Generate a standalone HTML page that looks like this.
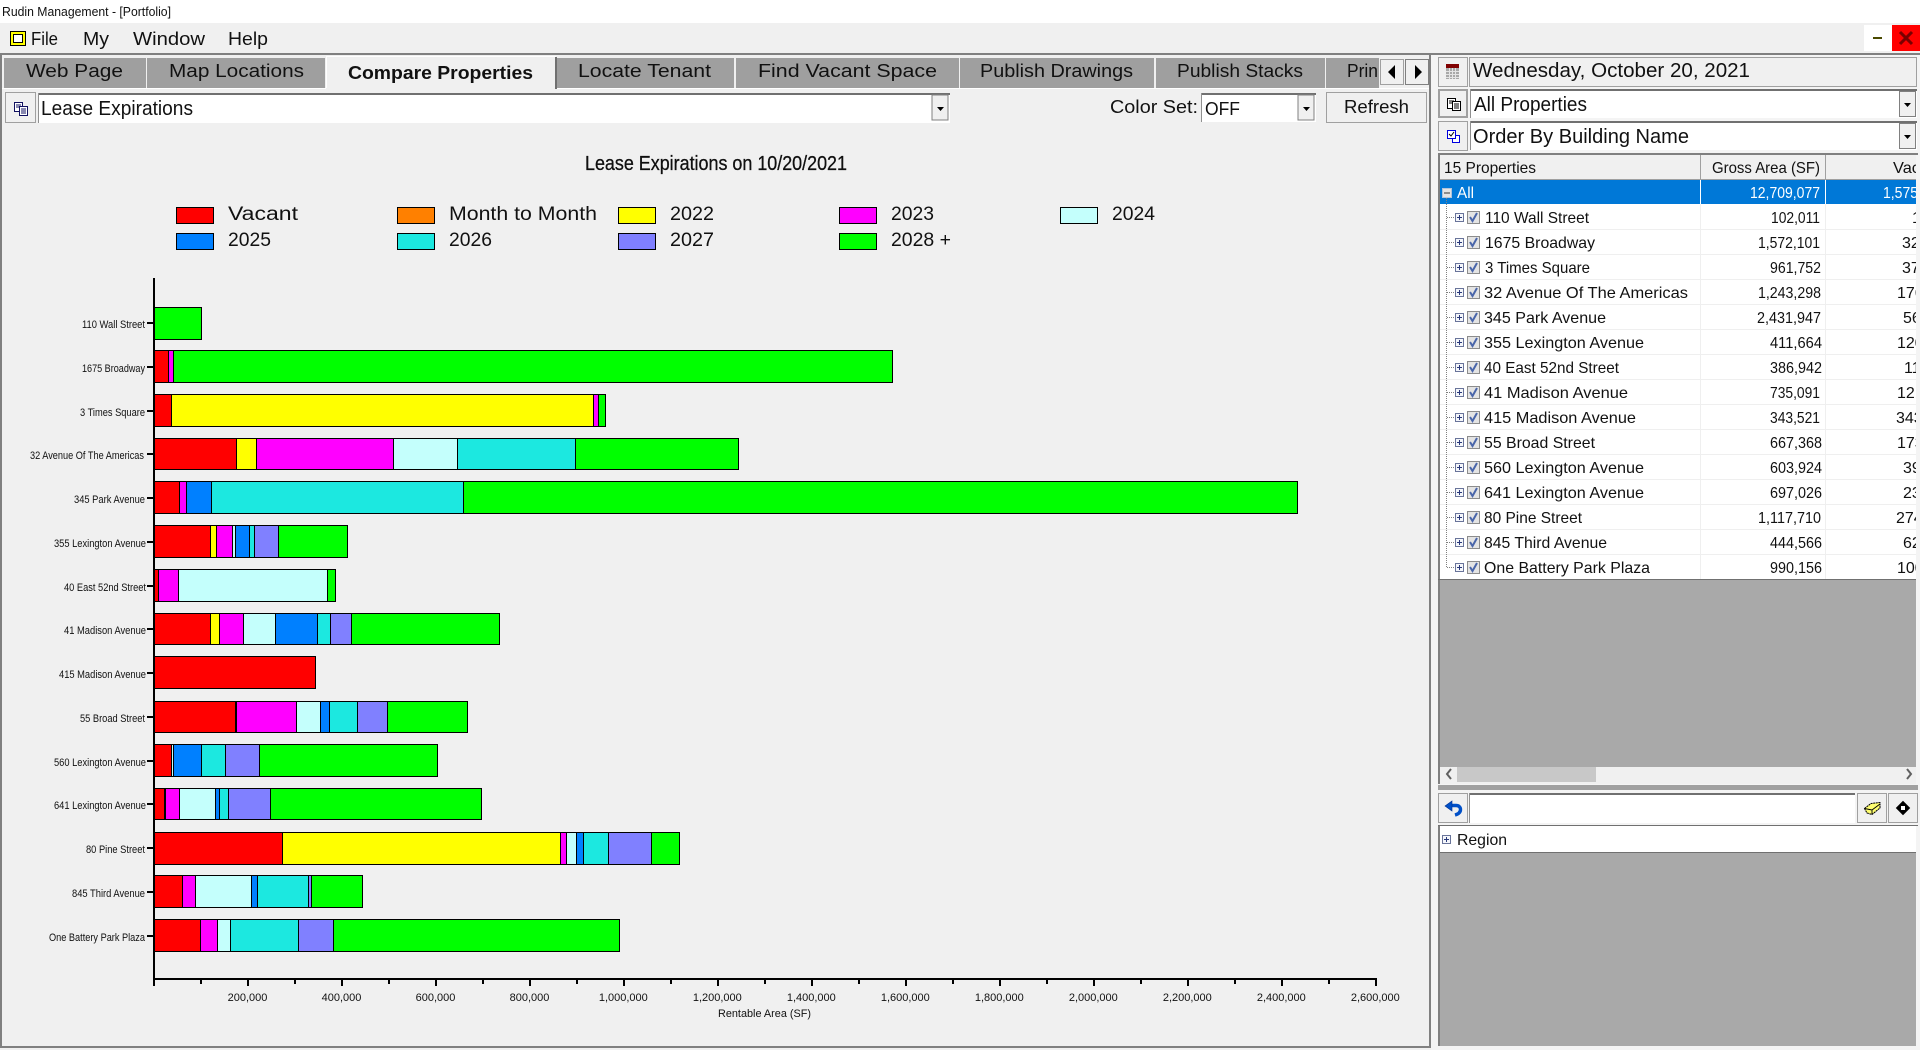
<!DOCTYPE html>
<html lang="en">
<head>
<meta charset="utf-8">
<title>Rudin Management - [Portfolio]</title>
<style>
html,body{margin:0;padding:0;width:1920px;height:1050px;overflow:hidden;background:#f0f0f0}
svg{display:block;font-family:"Liberation Sans",sans-serif}
text{fill:#111}
.t18{font-size:18px}.t19{font-size:19px}.t20{font-size:20px}.t16{font-size:16px}.t11{font-size:11px}.w{fill:#fff}
.bars rect{stroke:#000;stroke-width:1.4;shape-rendering:crispEdges}
.r{fill:#f00}.y{fill:#ff0}.m{fill:#f0f}.p{fill:#c4fffc}.b{fill:#0080ff}.c{fill:#1ce8e0}.l{fill:#8080ff}.g{fill:#0f0}.o{fill:#ff8000}
.crisp rect,.crisp path{shape-rendering:crispEdges}
</style>
</head>
<body>
<svg xmlns="http://www.w3.org/2000/svg" width="1920" height="1050" viewBox="0 0 1920 1050">
<defs>
<clipPath id="c3"><rect x="1826" y="155" width="90" height="425"/></clipPath>
<g id="rc">
<path d="M1447 13.5h8" stroke="#808080" stroke-dasharray="1 1"/>
<rect x="1455.5" y="9.5" width="8" height="8" fill="#f4f6fa" stroke="#69749a"/>
<path d="M1457 13.5h5M1459.5 11v5" stroke="#28387a"/>
<rect x="1467.5" y="7.5" width="12" height="12" fill="#e4e4e4" stroke="#8c8c8c"/>
<path d="M1470 13l2.5 4 4.5-8" fill="none" stroke="#4a66aa" stroke-width="2"/>
</g>
<path id="dd" d="M0 0h7l-3.5 4z" fill="#000"/>
</defs>

<!-- title bar -->
<rect x="0" y="0" width="1920" height="23" fill="#fff"/>
<text x="2" y="16" font-size="13" textLength="169" lengthAdjust="spacingAndGlyphs">Rudin Management - [Portfolio]</text>

<!-- menu bar -->
<g class="crisp">
<rect x="10" y="31" width="16" height="15" fill="#000"/>
<rect x="11" y="32" width="14" height="13" fill="#ff0"/>
<rect x="13" y="34" width="10" height="9" fill="#000"/>
<rect x="14" y="35" width="8" height="7" fill="#fff"/>
</g>
<text class="t18" x="31" y="45" textLength="27" lengthAdjust="spacingAndGlyphs">File</text>
<text class="t18" x="83" y="45" textLength="26" lengthAdjust="spacingAndGlyphs">My</text>
<text class="t18" x="133" y="45" textLength="72" lengthAdjust="spacingAndGlyphs">Window</text>
<text class="t18" x="228" y="45" textLength="40" lengthAdjust="spacingAndGlyphs">Help</text>
<rect x="1864" y="25" width="28" height="26" fill="#fff"/>
<rect x="1892" y="25" width="28" height="26" fill="#f00"/>
<rect x="1873" y="37" width="9" height="2" fill="#4a4a00"/>
<path d="M1900 32l12 12M1912 32l-12 12" stroke="#7a0000" stroke-width="3" fill="none"/>

<!-- main frame -->
<rect x="0" y="53" width="1920" height="2" fill="#808080"/>
<rect x="0" y="53" width="2" height="995" fill="#808080"/>
<rect x="1429" y="53" width="2" height="995" fill="#808080"/>
<rect x="0" y="1046" width="1431" height="2" fill="#808080"/>
<rect x="2" y="88" width="1427" height="1" fill="#fff"/>
<rect x="1431" y="55" width="489" height="995" fill="#f4f4f4"/>

<!-- tabs -->
<g class="crisp" fill="#9f9f9f">
<rect x="4" y="58" width="142" height="30"/>
<rect x="147" y="58" width="178" height="30"/>
<rect x="557" y="58" width="177" height="30"/>
<rect x="736" y="58" width="223" height="30"/>
<rect x="960" y="58" width="194" height="30"/>
<rect x="1156" y="58" width="169" height="30"/>
<rect x="1326" y="58" width="53" height="30"/>
</g>
<rect x="326" y="56" width="230" height="33" fill="#f0f0f0"/>
<rect x="326" y="56" width="230" height="1" fill="#fff"/>
<rect x="326" y="56" width="1" height="32" fill="#fff"/>
<rect x="555" y="57" width="2" height="32" fill="#707070"/>
<text class="t18" x="26" y="77" textLength="97" lengthAdjust="spacingAndGlyphs">Web Page</text>
<text class="t18" x="169" y="77" textLength="135" lengthAdjust="spacingAndGlyphs">Map Locations</text>
<text class="t18" x="348" y="79" font-weight="bold" textLength="185" lengthAdjust="spacingAndGlyphs">Compare Properties</text>
<text class="t18" x="578" y="77" textLength="133" lengthAdjust="spacingAndGlyphs">Locate Tenant</text>
<text class="t18" x="758" y="77" textLength="179" lengthAdjust="spacingAndGlyphs">Find Vacant Space</text>
<text class="t18" x="980" y="77" textLength="153" lengthAdjust="spacingAndGlyphs">Publish Drawings</text>
<text class="t18" x="1177" y="77" textLength="126" lengthAdjust="spacingAndGlyphs">Publish Stacks</text>
<text class="t18" x="1347" y="77" textLength="31" lengthAdjust="spacingAndGlyphs">Prin</text>
<g class="crisp">
<rect x="1380.5" y="59.5" width="23" height="25" fill="#f0f0f0" stroke="#a0a0a0"/>
<rect x="1405.5" y="59.5" width="23" height="25" fill="#f0f0f0" stroke="#808080"/>
</g>
<path d="M1395 65v14l-7-7zM1415 65v14l7-7z" fill="#000"/>

<!-- report selector row -->
<rect x="5.5" y="92.5" width="30" height="30" fill="#f0f0f0" stroke="#a0a0a0"/>
<g fill="#fff" stroke="#101060">
<rect x="14.5" y="102.5" width="8" height="9"/>
<rect x="19.5" y="106.5" width="8" height="9"/>
</g>
<path d="M16 105h5M16 107h3M21 109h5M21 111h5M21 113h5" stroke="#101060"/>
<rect x="38" y="93" width="912" height="30" fill="#fff"/>
<rect x="38" y="93" width="912" height="2" fill="#707070"/>
<rect x="38" y="93" width="1" height="30" fill="#909090"/>
<rect x="932" y="95" width="16" height="25" fill="#f0f0f0" stroke="#808080"/>
<use href="#dd" x="937" y="107"/>
<text class="t20" x="41" y="115" textLength="152" lengthAdjust="spacingAndGlyphs">Lease Expirations</text>
<text class="t18" x="1110" y="113" textLength="88" lengthAdjust="spacingAndGlyphs">Color Set:</text>
<rect x="1201" y="93" width="115" height="29" fill="#fff"/>
<rect x="1201" y="93" width="115" height="2" fill="#707070"/>
<rect x="1201" y="93" width="1" height="29" fill="#909090"/>
<rect x="1298" y="95" width="16" height="25" fill="#f0f0f0" stroke="#808080"/>
<use href="#dd" x="1303" y="107"/>
<text class="t18" x="1205" y="115" textLength="35" lengthAdjust="spacingAndGlyphs">OFF</text>
<rect x="1326.5" y="92.5" width="100" height="30" fill="#f0f0f0" stroke="#a0a0a0"/>
<text class="t18" x="1344" y="113" textLength="65" lengthAdjust="spacingAndGlyphs">Refresh</text>

<!-- chart title -->
<text class="t20" x="585" y="170" stroke="#000" stroke-width=".25" textLength="262" lengthAdjust="spacingAndGlyphs">Lease Expirations on 10/20/2021</text>

<!-- legend -->
<g class="crisp" stroke="#000">
<rect class="r" x="176.5" y="207.5" width="37" height="16"/>
<rect class="o" x="397.5" y="207.5" width="37" height="16"/>
<rect class="y" x="618.5" y="207.5" width="37" height="16"/>
<rect class="m" x="839.5" y="207.5" width="37" height="16"/>
<rect class="p" x="1060.5" y="207.5" width="37" height="16"/>
<rect class="b" x="176.5" y="233.5" width="37" height="16"/>
<rect class="c" x="397.5" y="233.5" width="37" height="16"/>
<rect class="l" x="618.5" y="233.5" width="37" height="16"/>
<rect class="g" x="839.5" y="233.5" width="37" height="16"/>
</g>
<text class="t19" x="228" y="220" textLength="70" lengthAdjust="spacingAndGlyphs">Vacant</text>
<text class="t19" x="449" y="220" textLength="148" lengthAdjust="spacingAndGlyphs">Month to Month</text>
<text class="t19" x="670" y="220" textLength="44" lengthAdjust="spacingAndGlyphs">2022</text>
<text class="t19" x="891" y="220" textLength="43" lengthAdjust="spacingAndGlyphs">2023</text>
<text class="t19" x="1112" y="220" textLength="43" lengthAdjust="spacingAndGlyphs">2024</text>
<text class="t19" x="228" y="246" textLength="43" lengthAdjust="spacingAndGlyphs">2025</text>
<text class="t19" x="449" y="246" textLength="43" lengthAdjust="spacingAndGlyphs">2026</text>
<text class="t19" x="670" y="246" textLength="44" lengthAdjust="spacingAndGlyphs">2027</text>
<text class="t19" x="891" y="246" textLength="60" lengthAdjust="spacingAndGlyphs">2028 +</text>

<!-- axes -->
<g class="crisp" fill="#000">
<rect x="153" y="278" width="2" height="702"/>
<rect x="153" y="978" width="1224" height="2"/>
<path d="M147 322h6v2h-6zM147 366h6v2h-6zM147 410h6v2h-6zM147 453h6v2h-6zM147 497h6v2h-6zM147 541h6v2h-6zM147 585h6v2h-6zM147 628h6v2h-6zM147 672h6v2h-6zM147 716h6v2h-6zM147 760h6v2h-6zM147 803h6v2h-6zM147 847h6v2h-6zM147 891h6v2h-6zM147 935h6v2h-6z"/>
<path d="M153 980h2v6h-2zM247 980h2v6h-2zM341 980h2v6h-2zM435 980h2v6h-2zM529 980h2v6h-2zM623 980h2v6h-2zM717 980h2v6h-2zM811 980h2v6h-2zM905 980h2v6h-2zM999 980h2v6h-2zM1093 980h2v6h-2zM1187 980h2v6h-2zM1281 980h2v6h-2zM1375 980h2v6h-2z"/>
<path d="M200 980h2v4h-2zM294 980h2v4h-2zM388 980h2v4h-2zM482 980h2v4h-2zM576 980h2v4h-2zM670 980h2v4h-2zM764 980h2v4h-2zM858 980h2v4h-2zM952 980h2v4h-2zM1046 980h2v4h-2zM1140 980h2v4h-2zM1234 980h2v4h-2zM1328 980h2v4h-2z"/>
</g>

<!-- y labels -->
<g class="t11">
<text x="82" y="328" textLength="63" lengthAdjust="spacingAndGlyphs">110 Wall Street</text>
<text x="82" y="372" textLength="63" lengthAdjust="spacingAndGlyphs">1675 Broadway</text>
<text x="80" y="416" textLength="65" lengthAdjust="spacingAndGlyphs">3 Times Square</text>
<text x="30" y="459" textLength="114" lengthAdjust="spacingAndGlyphs">32 Avenue Of The Americas</text>
<text x="74" y="503" textLength="71" lengthAdjust="spacingAndGlyphs">345 Park Avenue</text>
<text x="54" y="547" textLength="92" lengthAdjust="spacingAndGlyphs">355 Lexington Avenue</text>
<text x="64" y="591" textLength="82" lengthAdjust="spacingAndGlyphs">40 East 52nd Street</text>
<text x="64" y="634" textLength="82" lengthAdjust="spacingAndGlyphs">41 Madison Avenue</text>
<text x="59" y="678" textLength="87" lengthAdjust="spacingAndGlyphs">415 Madison Avenue</text>
<text x="80" y="722" textLength="65" lengthAdjust="spacingAndGlyphs">55 Broad Street</text>
<text x="54" y="766" textLength="92" lengthAdjust="spacingAndGlyphs">560 Lexington Avenue</text>
<text x="54" y="809" textLength="92" lengthAdjust="spacingAndGlyphs">641 Lexington Avenue</text>
<text x="86" y="853" textLength="59" lengthAdjust="spacingAndGlyphs">80 Pine Street</text>
<text x="72" y="897" textLength="73" lengthAdjust="spacingAndGlyphs">845 Third Avenue</text>
<text x="49" y="941" textLength="96" lengthAdjust="spacingAndGlyphs">One Battery Park Plaza</text>
</g>

<!-- x labels -->
<g class="t11" text-anchor="middle">
<text x="247.5" y="1001">200,000</text>
<text x="341.500" y="1001">400,000</text>
<text x="435.5" y="1001">600,000</text>
<text x="529.5" y="1001">800,000</text>
<text x="623.3" y="1001">1,000,000</text>
<text x="717.3" y="1001">1,200,000</text>
<text x="811.3" y="1001">1,400,000</text>
<text x="905.3" y="1001">1,600,000</text>
<text x="999.3" y="1001">1,800,000</text>
<text x="1093.3" y="1001">2,000,000</text>
<text x="1187.3" y="1001">2,200,000</text>
<text x="1281.3" y="1001">2,400,000</text>
<text x="1375.3" y="1001">2,600,000</text>
</g>
<text class="t11" x="718" y="1017" textLength="93" lengthAdjust="spacingAndGlyphs">Rentable Area (SF)</text>

<!-- bars -->
<g class="bars">
<g transform="translate(0,307.5)"><rect class="g" x="154.5" y="0" width="47" height="32"/></g>
<g transform="translate(0,350.5)"><rect class="r" x="154.5" y="0" width="14" height="32"/><rect class="m" x="168.5" y="0" width="5" height="32"/><rect class="g" x="173.5" y="0" width="719" height="32"/></g>
<g transform="translate(0,394.5)"><rect class="r" x="154.5" y="0" width="17" height="32"/><rect class="y" x="171.5" y="0" width="422" height="32"/><rect class="m" x="593.5" y="0" width="5" height="32"/><rect class="g" x="598.5" y="0" width="7" height="32"/></g>
<g transform="translate(0,438.5)"><rect class="r" x="154.5" y="0" width="82" height="31"/><rect class="y" x="236.5" y="0" width="20" height="31"/><rect class="m" x="256.5" y="0" width="137" height="31"/><rect class="p" x="393.5" y="0" width="64" height="31"/><rect class="c" x="457.5" y="0" width="118" height="31"/><rect class="g" x="575.5" y="0" width="163" height="31"/></g>
<g transform="translate(0,481.5)"><rect class="r" x="154.5" y="0" width="25" height="32"/><rect class="m" x="179.5" y="0" width="7" height="32"/><rect class="b" x="186.5" y="0" width="25" height="32"/><rect class="c" x="211.5" y="0" width="252" height="32"/><rect class="g" x="463.5" y="0" width="834" height="32"/></g>
<g transform="translate(0,525.5)"><rect class="r" x="154.5" y="0" width="56" height="32"/><rect class="y" x="210.5" y="0" width="6" height="32"/><rect class="m" x="216.5" y="0" width="16" height="32"/><rect class="p" x="232.5" y="0" width="3" height="32"/><rect class="b" x="235.5" y="0" width="14" height="32"/><rect class="c" x="249.5" y="0" width="5" height="32"/><rect class="l" x="254.5" y="0" width="24" height="32"/><rect class="g" x="278.5" y="0" width="69" height="32"/></g>
<g transform="translate(0,569.5)"><rect class="r" x="154.5" y="0" width="4" height="32"/><rect class="m" x="158.5" y="0" width="20" height="32"/><rect class="p" x="178.5" y="0" width="149" height="32"/><rect class="g" x="327.5" y="0" width="8" height="32"/></g>
<g transform="translate(0,613.5)"><rect class="r" x="154.5" y="0" width="56" height="31"/><rect class="y" x="210.5" y="0" width="9" height="31"/><rect class="m" x="219.5" y="0" width="24" height="31"/><rect class="p" x="243.5" y="0" width="32" height="31"/><rect class="b" x="275.5" y="0" width="42" height="31"/><rect class="c" x="317.5" y="0" width="13" height="31"/><rect class="l" x="330.5" y="0" width="21" height="31"/><rect class="g" x="351.5" y="0" width="148" height="31"/></g>
<g transform="translate(0,656.5)"><rect class="r" x="154.5" y="0" width="161" height="32"/></g>
<g transform="translate(0,701.5)"><rect class="r" x="154.5" y="0" width="81" height="31"/><rect class="y" x="235.5" y="0" width="1" height="31"/><rect class="m" x="236.5" y="0" width="60" height="31"/><rect class="p" x="296.5" y="0" width="24" height="31"/><rect class="b" x="320.5" y="0" width="9" height="31"/><rect class="c" x="329.5" y="0" width="28" height="31"/><rect class="l" x="357.5" y="0" width="30" height="31"/><rect class="g" x="387.5" y="0" width="80" height="31"/></g>
<g transform="translate(0,744.5)"><rect class="r" x="154.5" y="0" width="17" height="32"/><rect class="p" x="171.5" y="0" width="2" height="32"/><rect class="b" x="173.5" y="0" width="28" height="32"/><rect class="c" x="201.5" y="0" width="24" height="32"/><rect class="l" x="225.5" y="0" width="34" height="32"/><rect class="g" x="259.5" y="0" width="178" height="32"/></g>
<g transform="translate(0,788.5)"><rect class="r" x="154.5" y="0" width="10" height="31"/><rect class="y" x="164.5" y="0" width="1" height="31"/><rect class="m" x="165.5" y="0" width="14" height="31"/><rect class="p" x="179.5" y="0" width="36" height="31"/><rect class="b" x="215.5" y="0" width="4" height="31"/><rect class="c" x="219.5" y="0" width="9" height="31"/><rect class="l" x="228.5" y="0" width="42" height="31"/><rect class="g" x="270.5" y="0" width="211" height="31"/></g>
<g transform="translate(0,832.5)"><rect class="r" x="154.5" y="0" width="128" height="32"/><rect class="y" x="282.5" y="0" width="278" height="32"/><rect class="m" x="560.5" y="0" width="6" height="32"/><rect class="p" x="566.5" y="0" width="10" height="32"/><rect class="b" x="576.5" y="0" width="7" height="32"/><rect class="c" x="583.5" y="0" width="25" height="32"/><rect class="l" x="608.5" y="0" width="43" height="32"/><rect class="g" x="651.5" y="0" width="28" height="32"/></g>
<g transform="translate(0,875.5)"><rect class="r" x="154.5" y="0" width="28" height="32"/><rect class="m" x="182.5" y="0" width="13" height="32"/><rect class="p" x="195.5" y="0" width="56" height="32"/><rect class="b" x="251.5" y="0" width="6" height="32"/><rect class="c" x="257.5" y="0" width="51" height="32"/><rect class="l" x="308.5" y="0" width="3" height="32"/><rect class="g" x="311.5" y="0" width="51" height="32"/></g>
<g transform="translate(0,919.5)"><rect class="r" x="154.5" y="0" width="46" height="32"/><rect class="m" x="200.5" y="0" width="17" height="32"/><rect class="p" x="217.5" y="0" width="13" height="32"/><rect class="c" x="230.5" y="0" width="68" height="32"/><rect class="l" x="298.5" y="0" width="35" height="32"/><rect class="g" x="333.5" y="0" width="286" height="32"/></g>
</g>

<!-- right panel: date -->
<rect x="1438.5" y="57.5" width="29" height="29" fill="#f0f0f0" stroke="#a0a0a0"/>
<rect x="1446" y="64" width="13" height="4" fill="#800000"/>
<rect x="1446" y="68" width="13" height="11" fill="#a8a8a8"/>
<path d="M1449.5 68v11M1452.5 68v11M1455.5 68v11M1446 71.5h13M1446 74.5h13M1446 77.5h13" stroke="#e4e4e4"/>
<rect x="1469.5" y="57.5" width="447" height="29" fill="#f0f0f0" stroke="#a0a0a0"/>
<text class="t20" x="1473" y="77" textLength="277" lengthAdjust="spacingAndGlyphs">Wednesday, October 20, 2021</text>

<!-- all properties -->
<rect x="1439" y="90" width="28" height="27" fill="#f0f0f0" stroke="#a0a0a0" stroke-width="2"/>
<g fill="#fff" stroke="#000">
<rect x="1447.5" y="98.5" width="8" height="10"/>
<rect x="1452.5" y="101.5" width="8" height="9"/>
</g>
<path d="M1449 101h5M1449 103h3M1454 104h5M1454 106h5M1454 108h5" stroke="#000"/>
<rect x="1470" y="89" width="447" height="29" fill="#fff"/>
<rect x="1470" y="89" width="447" height="2" fill="#707070"/>
<rect x="1470" y="89" width="1" height="29" fill="#909090"/>
<rect x="1899.5" y="91.5" width="16" height="25" fill="#f0f0f0" stroke="#808080"/>
<use href="#dd" x="1904" y="103"/>
<text class="t20" x="1474" y="111" textLength="113" lengthAdjust="spacingAndGlyphs">All Properties</text>

<!-- order -->
<rect x="1438.5" y="121.5" width="29" height="29" fill="#f0f0f0" stroke="#a0a0a0"/>
<rect x="1452.5" y="135.5" width="7" height="7" fill="#fff" stroke="#0000e0"/>
<rect x="1447.5" y="130.5" width="8" height="8" fill="#fff" stroke="#0000e0"/>
<path d="M1449 134l2 2 3-4" fill="none" stroke="#000"/>
<rect x="1470" y="121" width="447" height="29" fill="#fff"/>
<rect x="1470" y="121" width="447" height="2" fill="#707070"/>
<rect x="1470" y="121" width="1" height="29" fill="#909090"/>
<rect x="1899.5" y="123.5" width="16" height="25" fill="#f0f0f0" stroke="#808080"/>
<use href="#dd" x="1904" y="135"/>
<text class="t20" x="1473" y="143" textLength="216" lengthAdjust="spacingAndGlyphs">Order By Building Name</text>

<!-- grey panel -->
<rect x="1439" y="154" width="477" height="613" fill="#a9a9a9"/>
<rect x="1438" y="153" width="480" height="2" fill="#808080"/>
<rect x="1438" y="153" width="2" height="631" fill="#808080"/>

<!-- table -->
<rect x="1440" y="155" width="476" height="25" fill="#f0f0f0"/>
<rect x="1440" y="179" width="476" height="1" fill="#a0a0a0"/>
<rect x="1700" y="155" width="1" height="25" fill="#a0a0a0"/>
<rect x="1825" y="155" width="1" height="25" fill="#a0a0a0"/>
<text class="t16" x="1444" y="173" textLength="92" lengthAdjust="spacingAndGlyphs">15 Properties</text>
<text class="t16" x="1712" y="173" textLength="108" lengthAdjust="spacingAndGlyphs">Gross Area (SF)</text>
<text class="t16" x="1893" y="173" clip-path="url(#c3)" textLength="27" lengthAdjust="spacingAndGlyphs">Vac</text>
<rect x="1440" y="180" width="476" height="24" fill="#0078d7"/>
<rect x="1700" y="180" width="1" height="24" fill="#fff"/>
<rect x="1825" y="180" width="1" height="24" fill="#fff"/>
<rect x="1440" y="204" width="476" height="375" fill="#fff"/>
<rect x="1438" y="579" width="478" height="1" fill="#707070"/>
<g fill="#efefef">
<rect x="1440" y="229" width="476" height="1"/><rect x="1440" y="254" width="476" height="1"/><rect x="1440" y="279" width="476" height="1"/><rect x="1440" y="304" width="476" height="1"/><rect x="1440" y="329" width="476" height="1"/><rect x="1440" y="354" width="476" height="1"/><rect x="1440" y="379" width="476" height="1"/><rect x="1440" y="404" width="476" height="1"/><rect x="1440" y="429" width="476" height="1"/><rect x="1440" y="454" width="476" height="1"/><rect x="1440" y="479" width="476" height="1"/><rect x="1440" y="504" width="476" height="1"/><rect x="1440" y="529" width="476" height="1"/><rect x="1440" y="554" width="476" height="1"/>
<rect x="1700" y="204" width="1" height="375"/><rect x="1825" y="204" width="1" height="375"/>
</g>
<rect x="1442.5" y="188.5" width="9" height="9" fill="#e4e4e4" stroke="#b0c4dc"/>
<path d="M1444 193h6" stroke="#333"/>
<text class="t16 w" x="1457" y="198" textLength="17" lengthAdjust="spacingAndGlyphs">All</text>
<text class="t16 w" x="1750" y="198" textLength="70" lengthAdjust="spacingAndGlyphs">12,709,077</text>
<text class="t16 w" x="1883" y="198" clip-path="url(#c3)" textLength="35" lengthAdjust="spacingAndGlyphs">1,575</text>
<path d="M1446.5 198V567" stroke="#808080" stroke-dasharray="1 1" fill="none"/>

<use href="#rc" y="204"/><use href="#rc" y="229"/><use href="#rc" y="254"/><use href="#rc" y="279"/><use href="#rc" y="304"/><use href="#rc" y="329"/><use href="#rc" y="354"/><use href="#rc" y="379"/><use href="#rc" y="404"/><use href="#rc" y="429"/><use href="#rc" y="454"/><use href="#rc" y="479"/><use href="#rc" y="504"/><use href="#rc" y="529"/><use href="#rc" y="554"/>

<g class="t16">
<text x="1485" y="223" textLength="104" lengthAdjust="spacingAndGlyphs">110 Wall Street</text>
<text x="1485" y="248" textLength="110" lengthAdjust="spacingAndGlyphs">1675 Broadway</text>
<text x="1485" y="273" textLength="105" lengthAdjust="spacingAndGlyphs">3 Times Square</text>
<text x="1484" y="298" textLength="204" lengthAdjust="spacingAndGlyphs">32 Avenue Of The Americas</text>
<text x="1484" y="323" textLength="122" lengthAdjust="spacingAndGlyphs">345 Park Avenue</text>
<text x="1484" y="348" textLength="160" lengthAdjust="spacingAndGlyphs">355 Lexington Avenue</text>
<text x="1484" y="373" textLength="135" lengthAdjust="spacingAndGlyphs">40 East 52nd Street</text>
<text x="1484" y="398" textLength="144" lengthAdjust="spacingAndGlyphs">41 Madison Avenue</text>
<text x="1484" y="423" textLength="152" lengthAdjust="spacingAndGlyphs">415 Madison Avenue</text>
<text x="1484" y="448" textLength="111" lengthAdjust="spacingAndGlyphs">55 Broad Street</text>
<text x="1484" y="473" textLength="160" lengthAdjust="spacingAndGlyphs">560 Lexington Avenue</text>
<text x="1484" y="498" textLength="160" lengthAdjust="spacingAndGlyphs">641 Lexington Avenue</text>
<text x="1484" y="523" textLength="98" lengthAdjust="spacingAndGlyphs">80 Pine Street</text>
<text x="1484" y="548" textLength="123" lengthAdjust="spacingAndGlyphs">845 Third Avenue</text>
<text x="1484" y="573" textLength="166" lengthAdjust="spacingAndGlyphs">One Battery Park Plaza</text>

<text x="1771" y="223" textLength="49" lengthAdjust="spacingAndGlyphs">102,011</text>
<text x="1758" y="248" textLength="62" lengthAdjust="spacingAndGlyphs">1,572,101</text>
<text x="1770" y="273" textLength="51" lengthAdjust="spacingAndGlyphs">961,752</text>
<text x="1758" y="298" textLength="63" lengthAdjust="spacingAndGlyphs">1,243,298</text>
<text x="1757" y="323" textLength="64" lengthAdjust="spacingAndGlyphs">2,431,947</text>
<text x="1770" y="348" textLength="52" lengthAdjust="spacingAndGlyphs">411,664</text>
<text x="1770" y="373" textLength="52" lengthAdjust="spacingAndGlyphs">386,942</text>
<text x="1770" y="398" textLength="50" lengthAdjust="spacingAndGlyphs">735,091</text>
<text x="1770" y="423" textLength="50" lengthAdjust="spacingAndGlyphs">343,521</text>
<text x="1770" y="448" textLength="52" lengthAdjust="spacingAndGlyphs">667,368</text>
<text x="1770" y="473" textLength="52" lengthAdjust="spacingAndGlyphs">603,924</text>
<text x="1770" y="498" textLength="52" lengthAdjust="spacingAndGlyphs">697,026</text>
<text x="1758" y="523" textLength="63" lengthAdjust="spacingAndGlyphs">1,117,710</text>
<text x="1770" y="548" textLength="52" lengthAdjust="spacingAndGlyphs">444,566</text>
<text x="1770" y="573" textLength="52" lengthAdjust="spacingAndGlyphs">990,156</text>
</g>
<g class="t16" clip-path="url(#c3)">
<text x="1912" y="223">1</text>
<text x="1902" y="248">32</text>
<text x="1902" y="273">37</text>
<text x="1897" y="298">176</text>
<text x="1903" y="323">56</text>
<text x="1897" y="348">120</text>
<text x="1904" y="373">11</text>
<text x="1897" y="398">121</text>
<text x="1896" y="423">343</text>
<text x="1897" y="448">173</text>
<text x="1903" y="473">39</text>
<text x="1903" y="498">23</text>
<text x="1896" y="523">274</text>
<text x="1903" y="548">62</text>
<text x="1897" y="573">100</text>
</g>

<!-- scrollbar -->
<rect x="1440" y="767" width="476" height="17" fill="#f0f0f0"/>
<rect x="1457" y="767" width="139" height="15" fill="#c8c8c8"/>
<path d="M1451 769l-4 5 4 5M1907 769l4 5-4 5" fill="none" stroke="#606060" stroke-width="2"/>
<rect x="1438" y="785" width="480" height="5" fill="#a0a0a0"/>

<!-- search row -->
<rect x="1438.5" y="793.5" width="29" height="29" fill="#f0f0f0" stroke="#a0a0a0"/>
<path d="M1451.5 805.500h4.500c3 0 4.500 1.800 4.500 4 0 2.500-2 4.500-5.500 5.500" fill="none" stroke="#0050c8" stroke-width="3.4"/>
<path d="M1445 806l7-5v10z" fill="#0050c8" stroke="#003090" stroke-width=".6"/>

<rect x="1469" y="793" width="386" height="30" fill="#fff"/>
<rect x="1469" y="793" width="386" height="2" fill="#707070"/>
<rect x="1469" y="793" width="1" height="30" fill="#909090"/>

<rect x="1857.5" y="793.5" width="29" height="29" fill="#f0f0f0" stroke="#a0a0a0"/>
<path d="M1864.500 808.500l6.500-5 9-1v5.500l-8 6.500-5-1.500z" fill="#ffff70" stroke="#000" stroke-width="1" stroke-dasharray="2 .6"/>
<path d="M1864.500 808.500l7.500 1.500 8-6M1872 810v4.500" fill="none" stroke="#000" stroke-width=".9"/>

<rect x="1888.5" y="793.5" width="29" height="29" fill="#f0f0f0" stroke="#a0a0a0"/>
<path d="M1903 801.500l6.500 6.500-6.500 6.500-6.500-6.500z" fill="#000" stroke="#000"/>
<rect x="1901" y="806" width="4" height="4" fill="#fff"/>

<!-- region tree -->
<rect x="1438" y="825" width="2" height="221" fill="#808080"/>
<rect x="1440" y="826" width="476" height="27" fill="#fff"/>
<rect x="1438" y="825" width="480" height="1" fill="#707070"/>
<rect x="1440" y="853" width="476" height="193" fill="#a9a9a9"/>
<rect x="1440" y="852" width="476" height="1" fill="#707070"/>
<rect x="1442.5" y="835.5" width="8" height="8" fill="#f4f6fa" stroke="#69749a"/>
<path d="M1444 839.500h5M1446.500 837v5" stroke="#28387a"/>
<text class="t16" x="1457" y="845" textLength="50" lengthAdjust="spacingAndGlyphs">Region</text>
</svg>
</body>
</html>
